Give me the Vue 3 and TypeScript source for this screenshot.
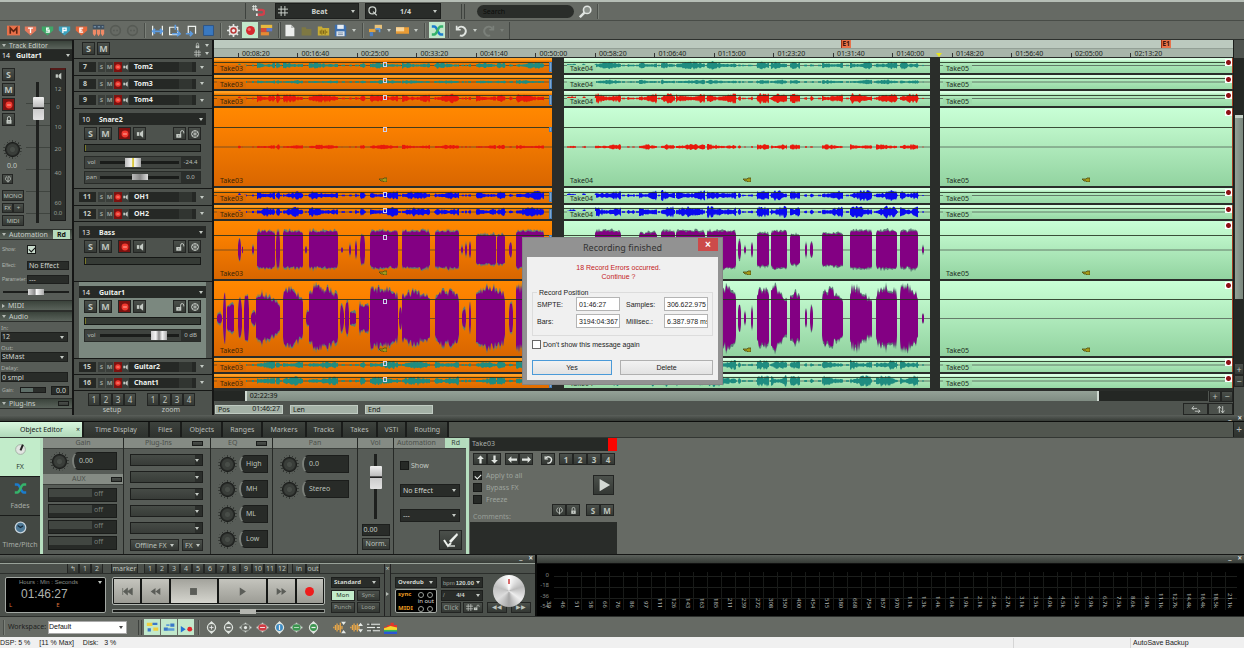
<script setup lang="ts">
interface Seg { a: number; b: number; v: number }
interface Track { n: number; name: string; h: number; color: string; amp: number; seed: number; big?: boolean; vol?: string; volAt?: number; pan?: string; sel?: boolean; shape?: 'solid' | 'ragged' }

const tracks: Track[] = [
  { n: 7, name: 'Tom2', h: 17, color: '#1f8c80', amp: 42, seed: 3 },
  { n: 8, name: 'Tom3', h: 16, color: '#1f8c80', amp: 26, seed: 5 },
  { n: 9, name: 'Tom4', h: 17, color: '#e8190c', amp: 58, seed: 8 },
  { n: 10, name: 'Snare2', h: 80, color: '#e8190c', amp: 6, seed: 11, big: true, vol: '-24.4', volAt: 42, pan: '0.0' },
  { n: 11, name: 'OH1', h: 17, color: '#0a0af0', amp: 56, seed: 14 },
  { n: 12, name: 'OH2', h: 16, color: '#0a0af0', amp: 68, seed: 17 },
  { n: 13, name: 'Bass', h: 60, color: '#830083', amp: 66, seed: 21, big: true, shape: 'solid' },
  { n: 14, name: 'Guitar1', h: 77, color: '#830083', amp: 90, seed: 25, big: true, vol: '0 dB', volAt: 75, sel: true, shape: 'ragged' },
  { n: 15, name: 'Guitar2', h: 16, color: '#1f8c80', amp: 56, seed: 29 },
  { n: 16, name: 'Chant1', h: 16, color: '#1f8c80', amp: 66, seed: 33 },
]

const seg = (list: number[][]): Seg[] => list.map(([a, b, v]) => ({ a, b, v }))
const segsA = seg([[24, 27, .6], [28, 29, .4], [38, 40, .25], [43, 61, 1], [62, 66, 1], [69, 89, 1], [91, 93, .2], [95, 124, 1], [127, 129, .15], [135, 137, .3], [141, 143, .5], [146, 151, .8], [156, 184, 1], [188, 216, 1], [221, 245, 1], [247, 249, .2], [251, 253, .35], [255, 257, .5], [262, 282, .8], [283, 291, .8], [295, 298, .4], [302, 330, 1]])
const segsB = seg([[3, 12, .4], [18, 22, .4], [31, 57, 1], [63, 66, .3], [68, 71, .3], [75, 93, .9], [97, 111, 1], [112, 141, 1], [143, 172, 1], [174, 177, .5], [180, 182, .2], [187, 189, .4], [193, 205, .9], [207, 223, 1], [226, 236, .8], [241, 243, .4], [246, 249, .4], [258, 279, .9], [286, 308, 1], [312, 333, 1], [336, 354, 1], [358, 360, .2]])
const segsGuitarA = seg([[3, 8, .15], [9, 12, .8], [13, 20, .45], [24, 28, .6], [30, 35, .75], [37, 42, .2], [42, 66, .8], [69, 89, .95], [92, 96, .25], [95, 124, 1], [126, 130, .4], [131, 135, .5], [136, 142, .2], [145, 155, .45], [156, 184, 1], [185, 188, .35], [188, 216, .85], [221, 245, .9], [248, 252, .3], [255, 257, .6], [262, 291, 1], [295, 299, .5], [302, 330, 1]])

function wave(segs: Seg[], amp: number, seed: number, shape?: string, extra = 0): string {
  let s = seed * 7919
  const rnd = () => { s = (s * 1103515245 + 12345) % 2147483648; return s / 2147483648 }
  return segs.map(({ a, b, v }) => {
    const up: string[] = []
    const down: string[] = []
    const wide = b - a > 12
    const phase = rnd() * 1.5
    for (let x = a; x <= b; x += 1) {
      const t = (x - a) / (b - a)
      let k = 1
      if (shape === 'ragged') k = (wide ? .8 + .2 * Math.sin(t * 3 + phase) : 1) * (.74 + rnd() * .28)
      else if (shape === 'solid') k = .9 + rnd() * .13
      else k = (wide ? .7 + .3 * Math.sin(t * 5 + phase * 4) : 1) * (.4 + rnd() * .75)
      const y = amp * v * k + extra * rnd()
      const taper = x === a || x === b ? (b - a > 5 ? .85 : .4) : 1
      up.push(`${x} ${(-y * taper).toFixed(1)}`)
      down.unshift(`${x} ${(y * taper * (.9 + rnd() * .12)).toFixed(1)}`)
    }
    return `M${up.join('L')}L${down.join('L')}Z`
  }).join('')
}

const clips = [
  { name: 'Take03', cls: 'orange', w: 338 },
  { name: 'Take04', cls: 'green', w: 366 },
  { name: 'Take05', cls: 'green last', w: 293 },
]
function clipPath(t: Track, i: number, extra = 0): string {
  if (i === 2) return ''
  const segs = i === 1 ? segsB : t.shape === 'ragged' ? segsGuitarA : segsA
  const gain = i === 1 && !t.shape ? 1.25 : 1
  return wave(segs, t.amp * gain, t.seed + i, t.shape, extra)
}

const times = ['00:08:20', '00:16:40', '00:25:00', '00:33:20', '00:41:40', '00:50:00', '00:58:20', '01:06:40', '01:15:00', '01:23:20', '01:31:40', '01:40:00', '01:48:20', '01:56:40', '02:05:00', '02:13:20']
const freqs = '39 46 51 58 66 76 86 97 111 126 143 163 185 211 239 272 308 350 400 454 515 580 668 754 857 970 1.1k 1.3k 1.4k 1.6k 1.9k 2.1k 2.4k 2.7k 3.1k 3.5k 4.0k 4.5k 5.2k 5.9k 6.7k 7.5k 8.6k 9.8k 11.1k 12.7k 14.4k 16.4k 18.5k 21.1k'.split(' ')
const tabs = ['Time Display', 'Files', 'Objects', 'Ranges', 'Markers', 'Tracks', 'Takes', 'VSTi', 'Routing']

const shield = (c: string, l: string) => `<path d="M1 3h14v5l-7 6-7-6z" fill="${c}"/><path d="${l}" stroke="#fff" stroke-width="1.6" fill="none"/>`
const eye = (c: string, inner: string) => `<path d="M0 8l8-6 8 6-8 6z" fill="#d5dbd5" stroke="#8e948e"/><ellipse cx="8" cy="8" rx="5" ry="4" fill="${c}"/>${inner}`
const zoomV = (c: string, inner: string) => `<path d="M8 0l4 4H4zM8 16l4-4H4z" fill="#dfe4df"/><circle cx="8" cy="8" r="5" fill="${c}" stroke="#dfe4df" stroke-width="1.5"/>${inner}`
const icons: Record<string, string> = {
  m: '<rect x="0" y="2" width="16" height="12" fill="#e8714a"/><path d="M4 12V5l4 4 4-4v7" stroke="#5c2412" stroke-width="2" fill="none"/>',
  t: shield('#e4795c', 'M5 5h6M8 5v6'),
  s: shield('#3fa868', 'M10 5H7v2.500h3V10H6'),
  p: shield('#3ba3bf', 'M6 11V5h4v3H6'),
  e: shield('#e5683c', 'M10 5H6v5h4M6 7.500h3'),
  auto: '<path d="M1 1h14v5H1z" fill="#3c4d5e"/><path d="M2 3.500h3M7 3.500h3M12 3.500h2" stroke="#9fc0d8"/><path d="M1 7h4v5l-2 3-2-3zM6 7h4v5l-2 3-2-3zM11 7h4v5l-2 3-2-3z" fill="#ef8a66"/>',
  cd: '<circle cx="8" cy="8" r="6" fill="none" stroke="#575b55" stroke-width="2"/><path d="M5 8h2M9 8h2" stroke="#575b55" stroke-width="2"/>',
  fit: '<path d="M2 2v12M14 2v12" stroke="#eef2ee" stroke-width="1.500"/><path d="M2 9h12M5 6L2 9l3 3M11 6l3 3-3 3" stroke="#5d9be0" stroke-width="2" fill="none"/>',
  loop: '<path d="M2 4h10v9H2z" stroke="#eef2ee" stroke-width="1.500" fill="none"/><path d="M5 12h9M11 8l4 4-4 3M9 1v6" stroke="#5d9be0" stroke-width="2" fill="none"/>',
  punch: '<path d="M4 12V3h9v9" stroke="#eef2ee" stroke-width="1.500" fill="none"/><path d="M1 12h8M6 9l3 3-3 3" stroke="#5d9be0" stroke-width="2" fill="none"/>',
  block: '<rect x="2" y="2" width="12" height="12" fill="#3a79c0" stroke="#254f86"/>',
  gear: '<circle cx="8" cy="8" r="5" fill="#b93a3a" stroke="#e4e6e4" stroke-width="2"/><path d="M8 0v3M8 13v3M0 8h3M13 8h3M2.500 2.500l2 2M11.500 11.500l2 2M2.500 13.500l2-2M11.500 4.500l2-2" stroke="#e4e6e4" stroke-width="2"/><circle cx="8" cy="8" r="2" fill="#eee"/>',
  rec: '<circle cx="8" cy="8" r="5.500" fill="#d6292f"/><circle cx="6.500" cy="6.500" r="2" fill="#ef6b70"/>',
  layers: '<path d="M1 1h14v4H1z" fill="#e7b93e"/><path d="M6 5h9v4H6z" fill="#5d78c8"/><path d="M1 5h7v5H1z" fill="#d44a35"/><path d="M1 10h10v4H1z" fill="#e88a33"/>',
  doc: '<path d="M3 1h7l4 4v10H3z" fill="#eceeec"/><path d="M10 1v4h4" fill="#b4b8b4"/>',
  fold: '<path d="M2 4h5l1 2h6v8H2z" fill="#7e7843"/>',
  foldw: '<path d="M1 3h5l1 2h8v9H1z" fill="#c9ad35"/><path d="M4 8v4M6 7v6M8 8v4M10 7v6M12 9v2" stroke="#6b520c"/>',
  save: '<path d="M1 1h12l2 2v12H1z" fill="#3d6fae"/><path d="M4 1h8v5H4z" fill="#e6ecf2"/><path d="M3 9h10v6H3z" fill="#dce3ea"/><path d="M5 11h6M5 13h6" stroke="#7188a5"/>',
  obj: '<path d="M0 6h8v4H0z" fill="#e0a23e"/><path d="M7 1h9v5H7z" fill="#e7c17a"/><path d="M8 6h5v4" stroke="#5f9be0" stroke-width="2" fill="none"/><path d="M1 10h4v5H1z" fill="#4f81c4"/>',
  bar: '<path d="M0 4h16v8H0z" fill="#e89b35"/><path d="M0 4h10v5H0z" fill="#f7d49a"/>',
  cross: '<path d="M1 3h3c4 0 4 10 8 10h3" stroke="#1b7ccc" stroke-width="3" fill="none"/><path d="M1 13h3c4 0 4-10 8-10h3" stroke="#35b36b" stroke-width="3" fill="none"/>',
  undo: '<path d="M2 2v5h5" fill="none" stroke="#e1e5e1" stroke-width="2"/><path d="M3 6a5.500 5.500 0 1 1 3 8" fill="none" stroke="#e1e5e1" stroke-width="2.500"/>',
  redo: '<path d="M14 2v5H9" fill="none" stroke="#7b807a" stroke-width="2"/><path d="M13 6a5.500 5.500 0 1 0-3 8" fill="none" stroke="#7b807a" stroke-width="2.500"/>',
  magnet: '<path d="M0 2h6M0 5h6M2 0v7M4.500 0v7" stroke="#e8ece8"/><path d="M7 6h5a3 3 0 0 1 0 6H7" fill="none" stroke="#d0404b" stroke-width="3"/><path d="M5 6h2M5 12h2" stroke="#eee" stroke-width="3"/>',
  lens: '<circle cx="10" cy="6" r="4.500" fill="#8b918b" stroke="#e0e4e0" stroke-width="2"/><path d="M7 9l-6 6" stroke="#e0e4e0" stroke-width="3"/>',
  hash: '<path d="M0 5h16M0 11h16M5 0v16M11 0v16" stroke="#cfd5cf" stroke-width="1.500"/>',
  q: '<circle cx="7" cy="7" r="5.500" fill="none" stroke="#cfd5cf" stroke-width="2"/><path d="M8 9l6 6" stroke="#cfd5cf" stroke-width="2"/>',
  lock: '<path d="M4 8h8v6H4z" fill="#c4cac4"/><path d="M5.500 8V5a2.500 2.500 0 0 1 5 0v3" fill="none" stroke="#c4cac4" stroke-width="1.500"/><path d="M8 10v2" stroke="#333"/>',
  unlock: '<path d="M2 8h8v6H2z" fill="#c4cac4"/><path d="M9 8V5a2.500 2.500 0 0 1 5 0v2" fill="none" stroke="#c4cac4" stroke-width="1.500"/><path d="M6 10v2" stroke="#333"/>',
  snow: '<circle cx="8" cy="8" r="5.500" fill="none" stroke="#c4cac4" stroke-width="1.500"/><path d="M8 2v12M3 5l10 6M3 11l10-6" stroke="#c4cac4" stroke-width="1.200"/>',
  spk: '<path d="M3 5h4v6H3z" fill="#c4cac4"/><path d="M8 6l5-4v12l-5-4z" fill="#c4cac4"/>',
  dot: '<circle cx="8" cy="8" r="5.500" fill="#f0392f"/><path d="M5 8h6" stroke="#ff9a8c" stroke-width="2"/>',
  phi: '<path d="M6 3a5 5 0 1 0 4 0 2 2 0 0 0-2 2v10" fill="none" stroke="#c4cac4" stroke-width="1.500"/>',
  pen: '<path d="M6 9l8-8 1 2-7 8z" fill="#eef2ee"/><path d="M1 8l4 6 3-3" stroke="#eef2ee" stroke-width="2" fill="none"/><path d="M6 14h6" stroke="#cfd5cf" stroke-width="1.500"/>',
  knob: '<circle cx="8" cy="8" r="6" fill="#e1e5e1" stroke="#9ba59d"/><path d="M8 9l3-7" stroke="#222" stroke-width="2.500"/>',
  clock: '<circle cx="8" cy="8" r="6.500" fill="#4d7895" stroke="#c8d4dc" stroke-width="1.500"/><path d="M4.500 5.500L8 8l3-2" stroke="#17293a" stroke-width="1.500" fill="none"/>',
  w1: '<path d="M1 2h7v4H1zM9 8h6v4H9z" fill="#f0cf3c"/><path d="M8 2h6v3H8zM2 9h4v4H2z" fill="#3977c8"/>',
  w2: '<path d="M1 8h5v4H1zM9 3h5v4H9z" fill="#3977c8"/><path d="M6 9h8v3H6zM4 4h4v2H4z" fill="#5b9bd8"/>',
  w3: '<path d="M1 6l6 4-6 4z" fill="#2473d4"/><circle cx="12" cy="10" r="3" fill="#e2262c"/>',
  z1: zoomV('#6c716b', '<path d="M5.500 8h5M8 5.500v5" stroke="#eee"/>'),
  z2: zoomV('#6c716b', '<path d="M5.500 8h5" stroke="#eee" stroke-width="1.500"/>'),
  z3: eye('#666a64', '<circle cx="8" cy="8" r="2" fill="#e6eae6"/>'),
  z4: eye('#cf3c44', '<path d="M5 8h6" stroke="#fff"/>'),
  z5: zoomV('#3d8cc4', '<path d="M8 5v6" stroke="#eee" stroke-width="1.500"/>'),
  z6: eye('#3c9650', '<path d="M5 8h6" stroke="#cfe9d3"/>'),
  z7: zoomV('#3c9650', '<path d="M5.500 8h5" stroke="#eee" stroke-width="1.500"/>'),
  a1: '<path d="M1 7v2M3 5v6M5 3v10M7 5v6M9 2v12M11 6v4" stroke="#eba848" stroke-width="1.500"/><path d="M10 1h6l-3 4zM10 15h6l-3-4z" fill="#e6eae6"/>',
  a2: '<path d="M1 7v2M3 5v6M5 3v10M7 5v6M9 3v10M11 6v4" stroke="#eba848" stroke-width="1.500"/><path d="M10 6h6l-3-4zM10 10h6l-3 4z" fill="#e6eae6"/>',
  a3: '<path d="M0 4h16M0 8h16M0 12h16" stroke="#e8ece8" stroke-width="1.500"/><path d="M4 2v4M11 6v4M6 10v4" stroke="#4d524d" stroke-width="2"/>',
  a4: '<path d="M0 7h4V5h4V2h4v3h4v10H0z" fill="#e3352b"/><path d="M0 9l3-1 5-2 8 2v7H0z" fill="#f4d92e"/><path d="M0 11h16v4H0z" fill="#35b94e"/><path d="M0 13h16v3H0z" fill="#2b55d6"/>',
  prev: '<path d="M1 3v10M8 3L2 8l6 5zM15 3L8 8l7 5z" fill="#5b5d58" stroke="#5b5d58"/>',
  rew: '<path d="M8 3L1 8l7 5zM15 3L8 8l7 5z" fill="#5b5d58"/>',
  stop: '<path d="M3 3h10v10H3z" fill="#5b5d58"/>',
  play: '<path d="M4 2l9 6-9 6z" fill="#5b5d58"/>',
  fwd: '<path d="M8 3l7 5-7 5zM1 3l7 5-7 5z" fill="#5b5d58"/>',
  recb: '<circle cx="8" cy="8" r="6.500" fill="#ee1c1c"/>',
  bigplay: '<path d="M3 1l12 7-12 7z" fill="#d3d8d3"/>',
  up: '<path d="M8 1l6 6h-4v8H6V7H2z" fill="#e1e5e1"/>',
  down: '<path d="M8 15l6-6h-4V1H6v8H2z" fill="#e1e5e1"/>',
  left: '<path d="M0 8l6-6v4h10v4H6v4z" fill="#e1e5e1"/>',
  right: '<path d="M16 8l-6-6v4H0v4h10v4z" fill="#e1e5e1"/>',
  hz: '<path d="M1 6h9M4 2L1 6l3 3M6 11h9M12 8l3 3-3 3" stroke="#d3d8d3" fill="none" stroke-width="1.500"/>',
  vt: '<path d="M5 14V3M2 6l3-4 3 4M11 2v11M8 10l3 4 3-4" stroke="#d3d8d3" fill="none" stroke-width="1.500"/>',
}
interface Tool { i: string; g?: boolean; label: string }
const toolsA: Tool[] = [
  { i: 'm', label: 'Mute' }, { i: 't', label: 'Track marker' }, { i: 's', label: 'Start' }, { i: 'p', label: 'Position' }, { i: 'e', label: 'End' }, { i: 'auto', label: 'Auto' }, { i: 'cd', label: 'CD' }, { i: 'cd', label: 'CD index' }, { i: '|', label: '' },
  { i: 'fit', label: 'Fit' }, { i: 'loop', label: 'Loop' }, { i: 'punch', label: 'Punch' }, { i: 'block', label: 'Block' }, { i: '|', label: '' },
  { i: 'gear', label: 'Settings' }, { i: 'rec', g: true, label: 'Record' }, { i: 'layers', label: 'Layers' }, { i: '|', label: '' },
]
const toolsB: Tool[] = [
  { i: 'doc', label: 'New' }, { i: 'fold', label: 'Open' }, { i: 'foldw', label: 'Open audio' }, { i: 'save', label: 'Save' }, { i: 'v', label: '' }, { i: '|', label: '' },
  { i: 'obj', label: 'Object' }, { i: 'v', label: '' }, { i: 'bar', label: 'Range' }, { i: 'v', label: '' }, { i: '|', label: '' },
  { i: 'cross', g: true, label: 'Crossfade' }, { i: '|', label: '' }, { i: 'undo', label: 'Undo' }, { i: 'v', label: '' }, { i: 'redo', label: 'Redo' },
]
const lower = ['z1', 'z2', 'z3', 'z4', 'z5', 'z6', 'z7']
const lower2 = ['a1', 'a2', 'a3', 'a4']
const transport = [['prev', 28], ['rew', 28], ['stop', 49], ['play', 50], ['fwd', 28], ['recb', 28]] as [string, number][]
const meterMarks = [['12', 18], ['0', 20], ['10', 22], ['20', 24], ['40', 30], ['60', 20]] as [string, number][]
</script>

<template>
  <div class="app">
    <header class="bars">
      <div class="bar bar1">
        <div class="spring1"></div>
        <button class="tool" aria-label="Snap"><svg viewBox="0 0 16 16" v-html="icons.magnet" /></button>
        <label class="pick beat"><svg viewBox="0 0 16 16" v-html="icons.hash" /><select aria-label="Grid"><option>Beat</option></select></label>
        <label class="pick quant"><svg viewBox="0 0 16 16" v-html="icons.q" /><select aria-label="Quantize"><option>1/4</option></select></label>
        <i class="sep dbl"></i>
        <input class="search" type="text" placeholder="Search" aria-label="Search" />
        <button class="tool" aria-label="Find"><svg viewBox="0 0 16 16" v-html="icons.lens" /></button>
        <i class="sep"></i>
      </div>
      <div class="bar bar2">
        <div class="toolset">
          <template v-for="(t, k) in toolsA" :key="k">
            <i v-if="t.i === '|'" class="sep"></i>
            <button v-else class="tool" :class="{ lit: t.g }" :aria-label="t.label"><svg viewBox="0 0 16 16" v-html="icons[t.i]" /></button>
          </template>
        </div>
        <div class="toolset">
          <template v-for="(t, k) in toolsB" :key="k">
            <i v-if="t.i === '|'" class="sep"></i>
            <i v-else-if="t.i === 'v'" class="caret"></i>
            <button v-else class="tool" :class="{ lit: t.g }" :aria-label="t.label"><svg viewBox="0 0 16 16" v-html="icons[t.i]" /></button>
          </template>
          <i class="caret dim"></i>
        </div>
      </div>
    </header>

    <main class="work">
      <aside class="editor">
        <h2 class="head"><i class="tri"></i>Track Editor</h2>
        <div class="tname"><span>14</span><b>Guitar1</b><i class="caret"></i></div>
        <div class="strip">
          <div class="sbtns">
            <button class="btn sq">S</button>
            <button class="btn sq">M</button>
            <button class="btn sq red" aria-label="Arm"><svg viewBox="0 0 16 16" v-html="icons.dot" /></button>
            <button class="btn sq" aria-label="Lock"><svg viewBox="0 0 16 16" v-html="icons.lock" /></button>
            <span class="knob k1"></span>
            <span class="kval">0.0</span>
            <button class="btn mini" aria-label="Phase"><svg viewBox="0 0 16 16" v-html="icons.phi" /></button>
            <button class="btn wide">MONO</button>
            <div class="pair"><button class="btn">FX</button><button class="btn">+</button></div>
            <button class="btn wide">MIDI</button>
          </div>
          <div class="fader"><i class="cap"></i></div>
          <div class="meter">
            <svg viewBox="0 0 16 16" v-html="icons.spk" />
            <span v-for="m in meterMarks" :key="m[0]" :style="{ height: m[1] + 'px' }">{{ m[0] }}</span>
            <span class="mval">0.0</span>
          </div>
        </div>
        <h2 class="head auto"><i class="tri"></i>Automation<em>Rd</em></h2>
        <label class="row check"><span>Show:</span><input type="checkbox" checked /></label>
        <label class="row"><span>Effect:</span><input class="dk" value="No Effect" /></label>
        <label class="row"><span>Parameter:</span><input class="dk" value="---" /></label>
        <div class="hslide"><i></i></div>
        <h2 class="head"><i class="tri side"></i>MIDI</h2>
        <h2 class="head"><i class="tri"></i>Audio</h2>
        <label class="stack">In:<span class="pick"><select><option>12</option></select></span></label>
        <label class="stack">Out:<span class="pick"><select><option>StMast</option></select></span></label>
        <label class="stack">Delay:<input class="dk" value="0 smpl" /></label>
        <div class="row gain"><span>Gain:</span><i></i><output class="dk">0.0</output></div>
        <h2 class="head plug"><i class="tri"></i>Plug-ins<i class="led"></i></h2>
      </aside>

      <section class="tracks">
        <div class="thead">
          <button class="btn sq">S</button><button class="btn sq">M</button>
          <div class="tiny"><span><svg viewBox="0 0 16 16" v-html="icons.lock" /><i class="caret"></i></span><span><svg viewBox="0 0 16 16" v-html="icons.hash" /><i class="caret"></i></span></div>
        </div>
        <div v-for="t in tracks" :key="t.n" class="track" :class="{ big: t.big, sel: t.sel }" :style="{ height: t.h + 'px' }">
          <div v-if="!t.big" class="line">
            <span class="num">{{ t.n }}</span>
            <span class="sm">S</span><span class="sm">M</span>
            <span class="arm"><svg viewBox="0 0 16 16" v-html="icons.dot" /></span>
            <svg class="sp" viewBox="0 0 16 16" v-html="icons.spk" />
            <b class="nm">{{ t.name }}</b><i class="caret"></i>
          </div>
          <template v-else>
            <div class="title"><span>{{ t.n }}</span><b>{{ t.name }}</b><i class="caret"></i></div>
            <div class="inner">
              <div class="btns">
                <button class="btn sq">S</button><button class="btn sq">M</button>
                <button class="btn sq red" aria-label="Arm"><svg viewBox="0 0 16 16" v-html="icons.dot" /></button>
                <button class="btn sq" aria-label="Monitor"><svg viewBox="0 0 16 16" v-html="icons.spk" /></button>
                <span class="fill"></span>
                <button class="btn sq" aria-label="Unlock"><svg viewBox="0 0 16 16" v-html="icons.unlock" /></button>
                <button class="btn sq" aria-label="Freeze"><svg viewBox="0 0 16 16" v-html="icons.snow" /></button>
              </div>
              <div class="lvl"></div>
              <div v-if="t.vol" class="ctl"><span>vol</span><div class="rail"><i :style="{ left: t.volAt + '%' }"></i></div><output>{{ t.vol }}</output></div>
              <div v-if="t.pan" class="ctl"><span>pan</span><div class="rail"><i class="low"></i></div><output>{{ t.pan }}</output></div>
            </div>
          </template>
        </div>
        <div class="tfoot">
          <div v-for="g in ['setup', 'zoom']" :key="g"><p><button v-for="i in 4" :key="i" class="btn">{{ i }}</button></p>{{ g }}</div>
        </div>
      </section>

      <section class="arrange">
        <div class="ruler">
          <div class="marks"></div>
          <div class="times"><span v-for="t in times" :key="t">{{ t }}</span></div>
          <b class="e1 first">E1</b><b class="e1 second">E1</b><i class="playhead"></i>
        </div>
        <div class="lanes">
          <div v-for="t in tracks" :key="t.n" class="lane" :class="{ big: t.big }" :style="{ height: t.h + 'px' }">
            <div v-for="(c, i) in clips" :key="c.name" class="clip" :class="c.cls">
              <svg :viewBox="`0 -100 ${c.w} 200`" preserveAspectRatio="none">
                <path :d="`M0 0H${c.w}`" stroke="#333" stroke-opacity=".6" stroke-width="1" vector-effect="non-scaling-stroke" />
                <path v-if="t.shape" :d="clipPath(t, i, 9)" fill="#5c7f78" />
                <path :d="clipPath(t, i)" :fill="t.color" />
                <path v-if="i < 2 && !t.big" :d="`M30 0H${c.w - 8}`" :stroke="t.color" stroke-dasharray="3 5 2 4" stroke-width="1.500" vector-effect="non-scaling-stroke" />
              </svg>
              <span class="take">{{ c.name }}</span>
              <i v-if="i === 0" class="grip mid"></i><i v-if="i === 0" class="grip end"></i>
              <i v-if="i === 2" class="spot"></i>
              <svg v-if="t.big" class="fish" viewBox="0 0 8 5"><path d="M0 2l4 0 1-1 3 0v4H5L4 4 2 4z" fill="#a39a1a" stroke="#4b4a10" stroke-width=".8" /></svg>
            </div>
          </div>
        </div>
        <div class="hscroll"><div class="track-h"><i class="thumb">02:22:39</i></div><button class="btn">+</button><button class="btn">−</button></div>
        <div class="posbar">
          <label>Pos<input value="01:46:27" /></label><label>Len<input value="" /></label><label>End<input value="" /></label>
          <span class="fill"></span>
          <button class="btn" aria-label="Horizontal zoom"><svg viewBox="0 0 16 16" v-html="icons.hz" /></button>
          <button class="btn" aria-label="Vertical zoom"><svg viewBox="0 0 16 16" v-html="icons.vt" /></button>
        </div>
      </section>
      <div class="vscroll"><div class="vt"><i></i></div><button class="btn">+</button><button class="btn">−</button><span></span></div>
    </main>

    <div class="grab"><span>_</span><span>×</span></div>
    <nav class="tabs">
      <button class="tab on">Object Editor<span>×</span></button>
      <button v-for="t in tabs" :key="t" class="tab">{{ t }}</button>
      <span class="fill"></span><button class="tab plus">+</button>
    </nav>

    <section class="object">
      <div class="sides">
        <button class="on"><svg viewBox="0 0 16 16" v-html="icons.knob" />FX</button>
        <button><svg viewBox="0 0 16 16" v-html="icons.cross" />Fades</button>
        <button><svg viewBox="0 0 16 16" v-html="icons.clock" />Time/Pitch</button>
      </div>
      <div class="col gaincol">
        <h3>Gain</h3>
        <div class="kn"><span class="knob"></span><output>0.00</output></div>
        <h3 class="with auxh">AUX<i class="led"></i></h3>
        <div class="aux"><div v-for="i in 4" :key="i"><span>off</span></div></div>
      </div>
      <div class="col plugs">
        <h3 class="with">Plug-Ins<i class="led"></i></h3>
        <div class="slots">
          <label v-for="i in 5" :key="i" class="pick slot"><select :aria-label="'Plug-in ' + i"><option></option></select></label>
          <div class="offl"><button class="btn">Offline FX<i class="caret"></i></button><button class="btn">FX<i class="caret"></i></button></div>
        </div>
      </div>
      <div class="col eq">
        <h3 class="with">EQ<i class="led"></i></h3>
        <div class="kns"><div v-for="b in ['High', 'MH', 'ML', 'Low']" :key="b" class="kn"><span class="knob"></span><output>{{ b }}</output></div></div>
      </div>
      <div class="col pan">
        <h3>Pan</h3>
        <div class="kns"><div v-for="b in ['0.0', 'Stereo']" :key="b" class="kn"><span class="knob"></span><output>{{ b }}</output></div></div>
      </div>
      <div class="col vol">
        <h3>Vol</h3>
        <div class="fader"><i class="cap"></i></div>
        <output class="dk">0.00</output><button class="btn">Norm.</button>
      </div>
      <div class="col autom">
        <h3>Automation<em>Rd</em></h3>
        <label class="chk"><input type="checkbox" />Show</label>
        <label class="pick"><select aria-label="Effect"><option>No Effect</option></select></label>
        <label class="pick"><select aria-label="Parameter"><option>---</option></select></label>
        <button class="btn pen" aria-label="Draw"><svg viewBox="0 0 16 16" v-html="icons.pen" /></button>
      </div>
      <div class="takebox">
        <div class="tk"><span>Take03</span><i></i></div>
        <div class="tkb">
          <span class="grp"><button class="btn" aria-label="Up"><svg viewBox="0 0 16 16" v-html="icons.up" /></button><button class="btn" aria-label="Down"><svg viewBox="0 0 16 16" v-html="icons.down" /></button></span>
          <span class="grp"><button class="btn" aria-label="Left"><svg viewBox="0 0 16 16" v-html="icons.left" /></button><button class="btn" aria-label="Right"><svg viewBox="0 0 16 16" v-html="icons.right" /></button></span>
          <span class="fill"></span>
          <span class="grp"><button class="btn" aria-label="Undo"><svg viewBox="0 0 16 16" v-html="icons.undo" /></button></span>
          <span class="grp"><button v-for="i in 4" :key="i" class="btn">{{ i }}</button></span>
        </div>
        <div class="opts">
          <div>
            <label class="chk"><input type="checkbox" checked />Apply to all</label>
            <label class="chk"><input type="checkbox" />Bypass FX</label>
            <label class="chk"><input type="checkbox" />Freeze</label>
            <label class="com" for="comments">Comments:</label>
          </div>
          <div class="opr">
            <button class="btn bp" aria-label="Play"><svg viewBox="0 0 16 16" v-html="icons.bigplay" /></button>
            <p><span class="grp"><button class="btn" aria-label="Phase"><svg viewBox="0 0 16 16" v-html="icons.phi" /></button><button class="btn" aria-label="Lock"><svg viewBox="0 0 16 16" v-html="icons.lock" /></button></span><span class="grp"><button class="btn">S</button><button class="btn">M</button></span></p>
          </div>
        </div>
        <textarea id="comments"></textarea>
      </div>
    </section>

    <section class="bottom">
      <div class="trans">
        <div class="grab"><span>_</span><span>×</span></div>
        <div class="tcols">
          <div class="tc1">
            <div class="markers">
              <p class="m1"><button class="btn">↰</button><button class="btn">1</button><button class="btn">2</button></p>
              <p class="m2"><button class="btn mk">marker</button></p>
              <p class="m3"><button v-for="i in 12" :key="i" class="btn">{{ i }}</button></p>
              <p class="m4"><button class="btn">in</button><button class="btn">out</button></p>
            </div>
            <div class="deck">
              <div class="lcd"><small>Hours : Min : Seconds<i class="caret"></i></small><b>01:46:27</b><p><span>L</span><span>E</span></p></div>
              <div class="keys">
                <div class="keyrow"><button v-for="[k, w] in transport" :key="k" :class="k" :style="{ flexGrow: w }" :aria-label="k"><svg viewBox="0 0 16 16" v-html="icons[k]" /></button></div>
                <div class="shuttle"><i></i></div>
              </div>
              <div class="modes">
                <label class="pick"><select aria-label="Mode"><option>Standard</option></select></label>
                <div><button class="btn on">Mon</button><button class="btn">Sync</button></div>
                <div><button class="btn">Punch</button><button class="btn">Loop</button></div>
              </div>
            </div>
          </div>
          <div class="fold"><span>×</span><i class="tri side"></i></div>
          <div class="tc2">
            <div class="topline"></div>
            <div class="deck2">
              <div class="ov">
                <label class="pick"><select aria-label="Record mode"><option>Overdub</option></select></label>
                <div class="sync"><p><b>sync</b><i></i><i></i></p><p class="io">in out</p><p><b>MIDI</b><i></i><i></i></p></div>
              </div>
              <div class="tempo">
                <label class="pick"><span>bpm</span><select><option>120.00</option></select></label>
                <label class="pick sig"><span>/</span><select><option>4/4</option></select></label>
                <div><button class="btn">Click</button><button class="btn" aria-label="Grid lock"><svg viewBox="0 0 16 16" v-html="icons.hash" /><svg viewBox="0 0 16 16" v-html="icons.unlock" /></button></div>
              </div>
              <div class="jog"><span class="wheel"></span><div><button class="btn">◀◀</button><button class="btn">▶▶</button></div></div>
            </div>
          </div>
        </div>
      </div>
      <div class="spec">
        <div class="grab"><span>_</span><span>×</span></div>
        <div class="screen">
          <div class="db"><span>0</span><span>-18</span><span>-36</span><span>-54</span></div>
          <div class="freqs"><span v-for="f in freqs" :key="f">{{ f }}</span></div>
        </div>
      </div>
    </section>

    <div class="space">
      <i class="sep"></i>
      <label for="ws">Workspace:</label>
      <span class="pick ws"><select id="ws"><option>Default</option></select></span>
      <i class="sep dbl"></i>
      <button class="tool lit" aria-label="View 1"><svg viewBox="0 0 16 16" v-html="icons.w1" /></button>
      <button class="tool lit" aria-label="View 2"><svg viewBox="0 0 16 16" v-html="icons.w2" /></button>
      <button class="tool lit" aria-label="View 3"><svg viewBox="0 0 16 16" v-html="icons.w3" /></button>
      <i class="sep"></i>
      <button v-for="l in lower" :key="l" class="tool" :aria-label="l"><svg viewBox="0 0 16 16" v-html="icons[l]" /></button>
      <i class="gap"></i>
      <button v-for="l in lower2" :key="l" class="tool" :aria-label="l"><svg viewBox="0 0 16 16" v-html="icons[l]" /></button>
    </div>
    <footer class="status"><span>DSP: 5 %</span><span>[11 % Max]</span><span>Disk: &nbsp; 3 %</span><span class="fill"></span><span class="cell"></span><span class="cell save">AutoSave Backup</span></footer>

    <form class="dialog" role="dialog" aria-label="Recording finished" @submit.prevent>
      <div class="dtitle"><h1>Recording finished</h1><button type="button" aria-label="Close">×</button></div>
      <div class="dbody">
        <p class="err">18 Record Errors occurred.<br />Continue ?</p>
        <fieldset>
          <legend>Record Position</legend>
          <label for="d1">SMPTE:</label><input id="d1" value="01:46:27" />
          <label for="d2">Samples:</label><input id="d2" value="306.622.975" />
          <label for="d3">Bars:</label><input id="d3" value="3194:04:367" />
          <label for="d4">Millisec.:</label><input id="d4" value="6.387.978 ms" />
        </fieldset>
        <label class="dont"><input type="checkbox" />Don't show this message again</label>
        <div class="dbtns"><button class="yes">Yes</button><button type="button">Delete</button></div>
      </div>
    </form>
  </div>
</template>

<style>
body { margin: 0; background: #f0f0f0; }
</style>

<style scoped>
* { box-sizing: border-box; margin: 0; }
.app { position: relative; min-height: 100vh; display: flex; flex-direction: column; background: #666a64; color: #c4cac4; font: 7px/9px "Noto Sans", "Open Sans", sans-serif; overflow: hidden; }
button, input, select, textarea { font: inherit; color: inherit; padding: 0; border: 0; border-radius: 0; background: none; min-width: 0; outline: none; }
i, em, output { font-style: normal; display: block; }
svg { display: block; }
.fill { flex: 1; }
.caret, .pick::after { content: ""; width: 0; height: 0; border: 2px solid transparent; border-top: 3px solid #c4cac4; border-bottom: 0; flex: none; }
.caret.dim { border-top-color: #7b807a; }
.tri { width: 0; height: 0; border: 2px solid transparent; border-top: 3px solid #b4bab4; border-bottom: 0; margin-right: 3px; }
.tri.side { border: 2px solid transparent; border-left: 3px solid #b4bab4; border-right: 0; }
.pick { display: flex; align-items: center; background: #292c29; border: 1px solid #1d1f1d; padding-right: 3px; height: 11px; color: #d0d5d0; }
.pick select { appearance: none; flex: 1; width: 100%; }
.btn { display: flex; align-items: center; justify-content: center; background: linear-gradient(#4b504b, #343834); border: 1px solid #232523; color: #bcc2bc; }
.btn svg { width: 8px; height: 8px; }
.btn.sq { width: 13px; height: 13px; font-size: 9px; font-weight: bold; flex: none; }
.btn.sq svg { width: 10px; height: 10px; }
.btn.red { background: #7c1210; }
.dk { background: #292c29; border: 1px solid #1d1f1d; }
.led { width: 11px; height: 5px; background: linear-gradient(#4a4e4a, #3a3e3a); border: 1px solid #1a1c1a; }
.knob { width: 19px; height: 19px; border-radius: 50%; background: radial-gradient(circle at 50% 50%, #484d48 0 2px, #3a3e3a 3px 5px, #1b1d1b 7px, #575c57 8px, transparent 8px), repeating-conic-gradient(#333733 0 5deg, #575c57 5deg 20deg); flex: none; }

.bars { border-top: 2px solid #b6beb6; height: 40px; border-bottom: 1px solid #2d302d; }
.bar { height: 19px; display: flex; align-items: center; }
.bar1 { height: 18px; }
.bar2 { border-top: 1px solid #484c47; }
.spring1 { width: 246px; border-right: 1px solid #3e423e; height: 16px; margin-right: 4px; }
.tool { width: 17px; height: 16px; display: flex; align-items: center; justify-content: center; flex: none; }
.tool svg { width: 13px; height: 13px; }
.tool.lit { background: #c2e8cb; width: 16px; }
.sep { height: 15px; background: #4a4e49; border-right: 1px solid #7b8079; flex: none; margin: 0 3px; width: 2px; }
.sep.dbl { width: 4px; border-left: 1px solid #3e423e; border-right: 1px solid #3e423e; background: none; margin: 0 12px 0 20px; }
.beat { width: 84px; height: 16px; margin-left: 8px; padding-left: 2px; }
.quant { width: 76px; height: 16px; margin-left: 6px; padding-left: 2px; }
.bar1 .pick svg { width: 10px; height: 10px; flex: none; }
.bar1 .pick select { text-align: center; text-align-last: center; font-weight: bold; }
.search { width: 97px; height: 13px; border-radius: 7px; background: #2a2d2a; padding-left: 6px; margin-right: 3px; }
.search::placeholder { color: #0c0d0c; opacity: 1; }
.toolset { display: flex; align-items: center; height: 17px; padding-left: 5px; }
.toolset:first-child .sep:last-child { margin: 0 0 0 3px; }
.toolset + .toolset { border-left: 1px solid #444844; border-right: 1px solid #444844; padding: 0 2px 0 0; }
.toolset .caret { margin: 0 3px; }

.work { display: flex; background: #4f544f; height: 375px; }
.editor { width: 74px; flex: none; border-right: 2px solid #151615; background: #575c57; display: flex; flex-direction: column; }
.head { display: flex; align-items: center; height: 11px; font-size: 7px; line-height: 9px; font-weight: 400; padding-left: 2px; background: linear-gradient(#3a433b, #5a635b); border-top: 1px solid #2b2e2b; border-bottom: 1px solid #2b2e2b; color: #c8cec8; flex: none; }
.editor > .head:first-child { height: 10px; }
.tname { display: flex; height: 11px; align-items: center; gap: 6px; background: #252825; padding: 0 2px; color: #eef1ee; }
.tname .caret { margin-left: auto; }
.strip { display: flex; padding-top: 7px; height: 168px; }
.sbtns { width: 26px; padding-left: 2px; display: flex; flex-direction: column; gap: 2px; }
.sbtns .sq { height: 13px; flex: none; }
.k1 { margin-top: 12px; margin-left: 1px; }
.kval { font-size: 7px; padding-left: 5px; }
.mini { width: 11px; height: 10px; flex: none; margin: 2px 0 4px; }
.wide { width: 22px; height: 11px; font: 6px/8px "Liberation Sans", sans-serif; flex: none; }
.pair { display: flex; width: 22px; }
.pair .btn { flex: 1; height: 10px; font-size: 6px; }
.fader { width: 24px; display: flex; justify-content: center; background: linear-gradient(90deg, transparent 10px, #1e201e 10px 13px, transparent 13px), repeating-linear-gradient(transparent 0 21px, #3f443f 21px 22px); margin: 14px 0 6px; }
.cap { width: 11px; height: 23px; background: linear-gradient(#f1f1f1, #bbb 45%, #222 46% 52%, #ccc 53%, #e2e2e2); border-radius: 1px; margin-top: 15px; flex: none; }
.meter { width: 16px; background: #2d302d; border: 1px solid #1b1c1b; display: flex; flex-direction: column; align-items: center; font-size: 6px; line-height: 8px; color: #9aa09a; border-top: 2px solid #541a18; margin-bottom: 8px; }
.meter svg { width: 9px; height: 12px; margin-bottom: 3px; flex: none; }
.mval { margin-top: -10px; }
.head em { margin-left: auto; align-self: stretch; background: #b5dcbd; color: #101210; font-weight: bold; padding: 0 4px; margin-right: 2px; }
.row { display: flex; align-items: center; height: 14px; padding: 0 3px 0 2px; font-size: 6px; color: #b0b6b0; }
.row span { width: 25px; flex: none; white-space: nowrap; font: 5px/7px "Liberation Sans", sans-serif; }
.row .dk { flex: 1; width: 10px; height: 9px; font-size: 7px; color: #d0d5d0; padding-left: 1px; line-height: 7px; }
.row.check { height: 18px; }
input[type="checkbox"] { appearance: none; width: 9px; height: 9px; background: #262926; border: 1px solid #171917; display: grid; place-items: center; flex: none; }
input[type="checkbox"]:checked::after { content: ""; width: 5px; height: 3px; border: 1px solid #f1f5f1; border-width: 0 0 1px 1px; transform: rotate(-45deg); }
.row.check input { background: #c9dccd; }
.row.check input::after { border-color: #111 !important; }
.hslide { height: 14px; padding: 3px 3px 0; }
.hslide i { height: 6px; background: linear-gradient(90deg, #ddd, #888 45%, #fff 50%, #aaa) 25px 0 / 16px 6px no-repeat, linear-gradient(#1c1e1c, #1c1e1c) 0 2px / 100% 2px no-repeat; }
.stack { display: block; font-size: 6px; line-height: 8px; padding: 2px 4px 0 1px; height: 20px; color: #a8aea8; }
.stack .pick, .stack .dk { font-size: 7px; height: 10px; width: 100%; line-height: 8px; color: #d0d5d0; }
.gain { height: 16px; }
.row.gain span { width: 18px; }
.gain i { width: 26px; height: 6px; background: linear-gradient(90deg, #5e6e68 50%, #2a2d2a 50%); border: 1px solid #1b1c1b; margin-right: 5px; }
.row.gain output { padding-left: 4px; }
.plug .led { margin-left: auto; margin-right: 3px; }

.tracks { width: 140px; flex: none; border-right: 2px solid #151615; display: flex; flex-direction: column; background: #4d524d; }
.thead { height: 18px; flex: none; display: flex; gap: 2px; padding: 2px 3px 0 8px; }
.tiny { margin-left: auto; display: flex; flex-direction: column; gap: 1px; }
.tiny span { display: flex; align-items: center; gap: 4px; height: 7px; }
.tiny svg { width: 7px; height: 7px; }
.track { flex: none; border-top: 1px solid #161816; padding: 0 6px 0 5px; position: relative; }
.line { height: 100%; display: flex; align-items: center; color: #eef1ee; }
.line > * { height: 10px; background: #252825; line-height: 10px; }
.num { width: 17px; padding-left: 4px; margin-right: 2px; font-weight: bold; color: #c8cec8; }
.sm { width: 7px; font-size: 6px; margin-right: 1px; text-align: center; color: #9aa09a; background: #3a3e3a; font-weight: bold; }
.arm { width: 8px; background: #7c1210; }
.arm svg { width: 8px; height: 10px; }
.line .sp { width: 7px; background: #3a3e3a; }
.nm { flex: 1; padding-left: 5px; background: linear-gradient(90deg, #252825 75%, #313531 75% 94%, #252825 94%); }
.line .caret { height: 0; background: none; margin: 0 2px 0 4px; }
.title { margin-top: 4px; height: 12px; background: #262926; display: flex; align-items: center; gap: 9px; padding: 0 3px 0 3px; color: #eef1ee; }
.title .caret { margin-left: auto; }
.inner { padding: 2px 5px 0; display: flex; flex-direction: column; }
.btns { display: flex; gap: 2px; height: 13px; }
.btns .red { margin-left: 4px; }
.lvl { height: 8px; margin-top: 4px; border: 1px solid #161816; background: linear-gradient(90deg, #7b7a28 1px, #363b36 1px); }
.ctl { display: flex; height: 13px; margin-top: 4px; background: #3f433f; border: 1px solid #282b28; align-items: center; font-size: 6px; color: #b9bfb9; }
.ctl + .ctl { margin-top: 2px; }
.ctl span { width: 13px; text-align: center; }
.ctl output { width: 19px; text-align: center; background: #2b2e2b; height: 100%; line-height: 11px; }
.rail { flex: 1; height: 3px; background: #1a1c1a; margin: 0 2px; position: relative; }
.rail i { position: absolute; top: -3px; width: 16px; height: 9px; margin-left: -8px; background: linear-gradient(90deg, #bbb, #f4f4f4 40%, #d9c840 48% 54%, #f4f4f4 60%, #aaa); }
.sel .rail i { background: linear-gradient(90deg, #ccc, #f4f4f4 30%, #888 50%, #f4f4f4 70%, #aaa); }
.rail i.low { left: 50%; height: 6px; top: -2px; background: linear-gradient(90deg, #bbb, #888 50%, #ddd); }
.big.sel { background: linear-gradient(90deg, transparent 5px, #7b887f 5px 132px, transparent 132px); }
.tfoot { display: flex; gap: 11px; padding: 2px 0 0 14px; border-top: 1px solid #161816; flex: 1; text-align: center; line-height: 7px; }
.tfoot p { display: flex; }
.tfoot .btn { width: 12px; height: 13px; font-size: 8px; }

.arrange { flex: 1; min-width: 0; display: flex; flex-direction: column; background: #2a2d2a; }
.ruler { position: relative; height: 18px; flex: none; color: #1c1f1c; background: #2a2d2a; }
.marks { height: 9px; background: #bccabf; border-bottom: 1px solid #93a096; }
.times { height: 8px; background: #a8b5aa; display: flex; padding-left: 2.35%; overflow: hidden; line-height: 9px; }
.times span { flex: 0 0 5.980%; padding-left: 4px; background: linear-gradient(#333, #333) 0 100% / 1px 4px no-repeat; }
.e1 { position: absolute; top: 0; width: 10px; height: 8px; background: #e8724b; color: #40140a; line-height: 8px; border-left: 1px solid #a3331a; text-align: center; }
.first { left: 61.500%; }
.second { left: 92.900%; }
.playhead { position: absolute; left: 70.900%; bottom: 1px; border: 3px solid transparent; border-top: 4px solid #e7e41c; border-bottom: 0; }
.lane { display: grid; grid-template-columns: 338fr 12fr 366fr 10fr 293fr; padding-bottom: 2px; }
.clip { position: relative; min-width: 0; overflow: hidden; }
.clip:nth-child(1) { grid-column: 1; }
.clip:nth-child(2) { grid-column: 3; }
.clip:nth-child(3) { grid-column: 5; }
.clip > svg:first-child { position: absolute; left: 0; top: 0; width: 100%; height: 100%; }
.orange { background: linear-gradient(#ff8800, #fa8000 25%, #d96600); }
.lane:not(.big) .orange { background: linear-gradient(#ffa024 2px, #ee7a00 3px, #e06c00); }
.green { background: linear-gradient(#c8ffd6, #bdf5c9 25%, #92d3a0); }
.lane:not(.big) .green { background: linear-gradient(#d9ffe2 2px, #b4edc0 3px, #98d9a6); }
.last { border-right: 1px solid #a33e22; }
.clip::before { content: ""; position: absolute; left: 0; right: 0; top: 24%; height: 1px; background: #23301f; opacity: .85; z-index: 1; }
.take { position: absolute; left: 3px; bottom: 0; padding: 0 3px; line-height: 8px; color: #1d2b1d; z-index: 2; }
.orange .take { background: #dc6c04; color: #3a2406; }
.green .take { background: #9ddaaa; }
.big .take { bottom: 1px; background: none; }
.grip { position: absolute; z-index: 2; width: 4px; height: 5px; border: 1px solid #cfd0f0; top: 24%; }
.grip.mid { left: 50%; }
.grip.end { right: 0; border-color: #4a7fb8; background: #7ea7cf; width: 3px; }
.lane:not(.big) .grip.end { height: 10px; top: 4px; }
.spot { position: absolute; right: 0; top: 1px; width: 7px; height: 7px; background: radial-gradient(circle, #8e1216 0 2px, #fff 3px); z-index: 2; }
.fish { position: absolute; left: 50%; bottom: 4px; width: 8px; height: 5px; margin-left: -4px; }
.hscroll { display: flex; height: 11px; padding-right: 0; background: #4f544f; flex: none; margin-top: 1px; }
.track-h { flex: 1; background: #242724; display: flex; margin: 0 1px 1px 0; }
.thumb { width: 85.900%; margin-left: 3.100%; background: linear-gradient(#94a297, #7f8c82); border-left: 2px solid #d0dad2; border-right: 2px solid #d0dad2; color: #101210; padding-left: 3px; line-height: 9px; }
.hscroll .btn, .vscroll .btn { width: 12px; font-size: 9px; }
.posbar { display: flex; flex: 1; background: #4f544f; padding: 1px 0 0 1px; gap: 7px; align-items: center; }
.posbar label { display: flex; width: 68px; height: 9px; background: #a4b1a6; border: 1px solid #c0cbc2; color: #181b18; line-height: 8px; padding: 0 2px; }
.posbar input { flex: 1; width: 20px; text-align: right; }
.posbar .btn { width: 25px; height: 12px; background: #4b504b; }
.posbar .btn + .btn { margin-left: -7px; }
.posbar .btn svg { width: 10px; height: 9px; }
.vscroll { width: 11px; flex: none; display: flex; flex-direction: column; padding-top: 18px; border-left: 1px solid #1c1e1c; }
.vt { height: 305px; background: #242724; padding: 57px 1px 0; }
.vt i { height: 184px; background: linear-gradient(90deg, #93a196, #7a877d); border-top: 3px solid #c4d0c7; }
.vscroll .btn { width: 100%; height: 12px; }

.grab { height: 7px; flex: none; display: flex; justify-content: flex-end; gap: 6px; padding-right: 2px; background: linear-gradient(#5b605b, #363b36); border-bottom: 1px solid #0c0d0c; font-size: 8px; line-height: 6px; color: #d8dcd8; font-weight: bold; }
.grab span:first-child { line-height: 2px; }
.tabs { display: flex; height: 16px; flex: none; background: #51564f; border-bottom: 1px solid #333733; }
.tab { padding: 0 8px; background: linear-gradient(#3d423d, #2e322e); border-right: 2px solid #1a1c1a; color: #b7bdb7; }
.tab.on { background: linear-gradient(#d8f7de, #b1d9ba); color: #16201a; padding: 0 2px 0 20px; display: flex; align-items: center; width: 84px; justify-content: space-between; }
.tab:nth-child(2) { padding: 0 11px; }
.tab:nth-child(n+4):nth-child(-n+10) { padding: 0 7px; }
.tab.plus { padding: 0 2px; font-size: 10px; border-left: 1px solid #1a1c1a; border-right: 0; }
.object { display: flex; height: 117px; flex: none; border-bottom: 1px solid #151615; }
.sides { width: 43px; flex: none; display: flex; flex-direction: column; border-right: 3px solid #b7dfc0; background: #1a1c1a; gap: 1px; }
.sides button { flex: 1; display: flex; flex-direction: column; align-items: center; justify-content: space-evenly; background: #434843; color: #a7ada7; white-space: nowrap; }
.sides .on { background: #c2ecca; color: #2d3a30; }
.sides svg { width: 13px; height: 13px; }
.col { background: #575c57; border-right: 1px solid #262926; display: flex; flex-direction: column; flex: none; }
.col h3 { height: 11px; width: 100%; background: #858b84; border-bottom: 1px solid #3b3f3b; color: #4b4f4a; font-size: 7px; line-height: 10px; font-weight: 400; display: flex; align-items: center; justify-content: center; flex: none; }
.col h3.with { justify-content: space-between; padding: 0 7px 0 21px; }
.col h3.auxh { padding: 0 1px 0 29px; }
.eq h3.with { padding: 0 5px 0 17px; }
.gaincol { width: 81px; }
.kn { display: flex; align-items: center; gap: 3px; padding-left: 7px; height: 18px; }
.kn output { background: #282b28; border: 1px solid #1b1d1b; border-left: 2px solid #7a7f79; border-radius: 6px 0 0 6px / 50% 0 0 50%; height: 18px; line-height: 16px; flex: 1; padding-left: 5px; color: #bcc2bc; }
.gaincol .kn { padding-right: 6px; margin: 3px 0 4px; }
.aux { padding: 3px 6px 0 5px; display: flex; flex-direction: column; gap: 2px; }
.aux div { height: 14px; border: 1px solid #1a1c1a; background: linear-gradient(90deg, #414641 43px, transparent 43px) 0 0 / 100% 8px no-repeat, #272a27; text-align: center; padding-left: 32px; color: #7a807a; line-height: 9px; }
.plugs { width: 87px; }
.slots { padding: 5px 7px 0 6px; display: flex; flex-direction: column; gap: 5px; }
.slot { height: 12px; background: linear-gradient(90deg, transparent 64px, #2b2e2b 64px), linear-gradient(#464b46, #383c38); }
.offl { display: flex; gap: 3px; }
.offl .btn { height: 12px; flex: 5 0 auto; gap: 3px; padding: 0 2px; }
.offl .btn + .btn { flex: 1 0 auto; }
.eq { width: 62px; }
.kns { display: flex; flex-direction: column; gap: 7px; padding-top: 6px; }
.eq .kn { padding-right: 4px; gap: 2px; }
.pan { width: 85px; }
.pan .kn { padding-right: 8px; }
.vol { width: 36px; align-items: center; }
.vol .fader { flex: 1; margin: 5px 0; background: linear-gradient(90deg, transparent 10px, #1e201e 10px 13px, transparent 13px); }
.vol .cap { margin-top: 12px; width: 12px; height: 23px; }
.vol .dk, .vol .btn { width: 28px; height: 12px; margin-bottom: 2px; padding-left: 1px; flex: none; line-height: 10px; }
.vol .btn { margin-bottom: 4px; height: 12px; }
.autom { width: 75px; border-right: 3px solid #b7dfc0; padding: 0; }
.autom h3 { justify-content: space-between; padding-left: 3px; }
.autom h3 em { background: #b5dcbd; padding: 0 6px; color: #39443b; }
.chk { display: flex; align-items: center; gap: 4px; color: #9fa59f; }
.autom .chk { margin: 12px 6px 14px; color: #c4cac4; gap: 2px; }
.autom .pick { margin: 0 6px 12px; height: 13px; padding-left: 2px; flex: none; }
.pen { width: 23px; height: 20px; align-self: flex-end; margin: -4px 4px 0; flex: none; }
.pen svg { width: 16px; height: 16px; }
.takebox { width: 148px; flex: none; display: flex; flex-direction: column; padding-left: 1px; }
.tk { height: 13px; background: #262926; display: flex; padding-left: 2px; line-height: 12px; color: #aab0aa; flex: none; }
.tk span { flex: 1; }
.tk i { width: 9px; background: #fb0500; }
.tkb { display: flex; gap: 4px; padding: 2px 3px 0; height: 15px; flex: none; }
.grp { display: flex; }
.grp .btn { width: 14px; height: 12px; font-size: 8px; font-weight: bold; }
.grp .btn svg { width: 9px; height: 9px; }
.opts { display: flex; justify-content: space-between; height: 56px; padding: 5px 3px 0 3px; flex: none; }
.opts .chk { margin-bottom: 3px; }
.com { display: block; margin-top: 8px; color: #989e98; }
.opr { display: flex; flex-direction: column; align-items: flex-end; gap: 9px; padding-top: 4px; }
.opr p { display: flex; gap: 6px; }
.bp { width: 21px; height: 20px; }
.bp svg { width: 14px; height: 14px; }
.takebox textarea { flex: 1; width: 100%; resize: none; background: #292c29; display: block; }

.bottom { display: flex; flex: none; height: 62px; border-bottom: 1px solid #2b2e2b; }
.trans { width: 537px; flex: none; border-right: 2px solid #0c0d0c; display: flex; flex-direction: column; background: #4b504b; }
.bottom .grab { height: 9px; margin-top: 0; border-bottom: 1px solid #99a299; }
.tcols { display: flex; flex: 1; }
.tc1 { width: 384px; display: flex; flex-direction: column; }
.markers { display: flex; height: 10px; border-bottom: 1px solid #2b2e2b; }
.markers p { display: flex; }
.markers .btn { width: 12px; border-width: 0 1px; padding: 0; }
.m1 { margin-left: 67px; margin-right: 8px; }
.m2 .btn.mk { width: 27px; }
.m3 { margin: 0 4px 0 6px; }
.m4 .btn { width: 14px; }
.m3 .btn { width: 12px; }
.deck { display: flex; padding: 3px 4px 3px 5px; gap: 6px; flex: 1; }
.lcd { width: 101px; background: #000; border: 1px solid #a4a9a4; border-radius: 2px; padding: 1px 3px; color: #aeb2ae; line-height: 7px; flex: none; }
.lcd small { font: 6px/7px "Liberation Sans", sans-serif; display: flex; justify-content: space-between; padding-left: 10px; align-items: center; color: #8a8f8a; }
.lcd b { font: 12px/16px "Liberation Sans", sans-serif; display: block; padding-left: 12px; }
.lcd p { display: flex; color: #d8743c; gap: 44px; font-size: 6px; }
.keys { flex: 1; display: flex; flex-direction: column; gap: 4px; }
.keyrow { display: flex; gap: 2px; height: 28px; background: #161816; border: 1px solid #b3b8b3; border-radius: 2px; padding: 1px; }
.keyrow button { flex: 1 1 0; background: linear-gradient(#c4c4bd, #9c9c95); display: grid; place-items: center; }
.keyrow .stop { background: linear-gradient(#a3a39c, #d5d5ce); }
.keyrow svg { width: 13px; height: 11px; }
.shuttle { height: 4px; border: 1px solid #8f948f; background: #161816; display: flex; align-items: center; }
.shuttle i { width: 16px; height: 5px; background: #b4b6b0; margin-left: 60%; flex: none; }
.modes { width: 49px; display: flex; flex-direction: column; justify-content: space-between; margin-left: 0; flex: none; font-size: 6px; }
.modes div, .tempo div { display: flex; gap: 2px; }
.modes .btn, .tempo .btn { flex: 1; height: 11px; color: #9da39d; }
.modes .btn.on { background: #c2ecca; color: #223027; }
.modes .pick, .ov .pick, .tempo .pick { font-weight: bold; font-size: 6px; padding-left: 2px; }
.tempo .pick { padding: 0 2px 0 1px; gap: 1px; font: bold 6px/8px "Liberation Sans", sans-serif; }
.tempo .pick span { font-weight: 400; color: #9da39d; flex: none; }
.tempo .sig select { text-align: center; text-align-last: center; }
.fold { width: 7px; border: 1px solid #222; border-width: 0 1px; display: flex; flex-direction: column; align-items: center; justify-content: space-between; padding-bottom: 20px; }
.fold .tri { margin: 0; }
.tc2 { flex: 1; display: flex; flex-direction: column; }
.topline { height: 10px; border-bottom: 1px solid #2b2e2b; }
.deck2 { display: flex; gap: 4px; padding: 3px 4px; flex: 1; }
.ov, .tempo { width: 42px; display: flex; flex-direction: column; justify-content: space-between; flex: none; }
.sync { height: 24px; background: #000; border: 1px solid #a4a9a4; border-radius: 2px; font-size: 6px; line-height: 7px; padding: 1px 2px; }
.sync p { display: flex; gap: 3px; align-items: center; }
.sync b { color: #e89a22; width: 17px; }
.sync i { width: 6px; height: 6px; border: 1px solid #9ba09b; border-radius: 50%; }
.sync .io { justify-content: flex-end; color: #ddd; }
.tempo .btn svg { width: 7px; height: 7px; }
.jog { flex: 1; display: flex; flex-direction: column; align-items: center; position: relative; }
.wheel { width: 32px; height: 32px; flex: none; border-radius: 50%; margin-top: -2px; background: linear-gradient(#d86a6a, #d86a6a) 50% 4px / 2px 5px no-repeat, conic-gradient(#fff, #bbb 20%, #eee 35%, #a5a5a5 50%, #ddd 65%, #c0c0c0 80%, #fff); z-index: 1; }
.jog div { display: flex; justify-content: space-between; width: 100%; margin-top: -5px; }
.jog .btn { width: 20px; height: 11px; font-size: 6px; }
.spec { flex: 1; display: flex; flex-direction: column; background: #000; min-width: 0; }
.spec .grab { border-bottom-color: #111; }
.screen { flex: 1; display: flex; padding-right: 7px; }
.db { width: 14px; flex: none; display: flex; flex-direction: column; justify-content: space-between; font-size: 6px; line-height: 6px; padding: 8px 2px 7px 0; text-align: right; color: #888e88; }
.freqs { flex: 1; margin-left: -9px; padding-left: 0; display: flex; align-items: flex-end; padding-bottom: 8px; background: repeating-linear-gradient(90deg, transparent 0 13px, #181a18 13px 14px) 12px 8px / 100% 38px no-repeat, repeating-linear-gradient(transparent 0 10px, #1c1e1c 10px 11px) 12px 2px / 100% 36px no-repeat; }
.freqs span { flex: 1 1 0; writing-mode: vertical-rl; font-size: 6px; line-height: 14px; color: #b4b9b4; height: 18px; text-align: right; width: 0; }

.space { height: 20px; flex: none; display: flex; align-items: center; color: #1e211e; font: 7px/10px "Liberation Sans", sans-serif; }
.space label { margin-left: 0; width: 40px; font-family: "Noto Sans", sans-serif; }
.ws { width: 79px; height: 13px; background: #fff; border-color: #aaa; color: #111; }
.ws::after { border-top-color: #444; }
.space .sep.dbl { margin: 0 2px 0 11px; }
.space .tool.lit { margin-right: 1px; }
.gap { width: 9px; }
.status { height: 12px; flex: 1 0 12px; display: flex; align-items: center; gap: 9px; background: #f0f0f0; color: #1a1a1a; font: 7px/10px "Liberation Sans", sans-serif; }
.cell { border-left: 1px solid #d5d5d5; height: 10px; width: 108px; }
.save { width: 114px; padding-left: 2px; }

.dialog { position: absolute; left: 50%; top: 237px; width: 201px; margin-left: -100px; background: #929292; border: 1px solid #858585; padding: 0 4px 4px; color: #222; font: 7px/9px "Liberation Sans", sans-serif; z-index: 5; }
.dtitle { display: flex; height: 19px; position: relative; justify-content: center; align-items: center; }
.dtitle h1 { font: 9px/12px "Noto Sans", sans-serif; color: #333; }
.dtitle button { position: absolute; right: 0; top: 0; width: 20px; height: 13px; background: #cc4a4a; color: #fff; font-weight: bold; font-size: 10px; }
.dbody { background: #f0f0f0; padding: 6px 5px 5px; }
.err { text-align: center; color: #c41a24; line-height: 9px; margin-bottom: 7px; padding-right: 8px; }
fieldset { border: 1px solid #dcdcdc; padding: 0 4px 7px; display: grid; grid-template-columns: 39px 44px 44px 44px; gap: 3px 0; align-items: center; justify-content: start; min-width: 0; }
fieldset label:nth-of-type(even) { padding-left: 6px; }
legend { padding: 0 2px; }
fieldset input { background: #fff; border: 1px solid #b4b4b4; height: 14px; width: 44px; padding-left: 2px; }
.dont { display: flex; align-items: center; gap: 2px; margin: 4px 0 11px; }
.dont input[type="checkbox"] { background: #fff; border-color: #666; }
.dbtns { display: flex; gap: 8px; }
.dbtns button { flex: 92; height: 15px; background: linear-gradient(#f2f2f2, #e2e2e2); border: 1px solid #b0b0b0; }
.dbtns .yes { flex: 79; border-color: #4a9ad8; }
</style>
